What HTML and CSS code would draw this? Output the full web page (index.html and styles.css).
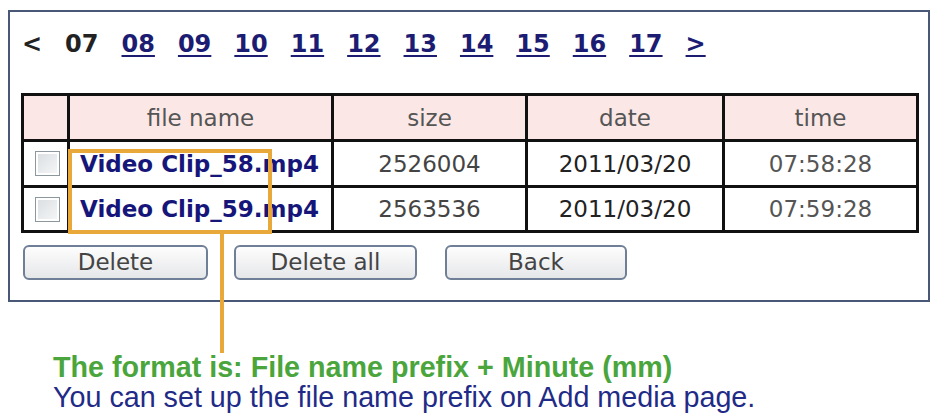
FILE: index.html
```html
<!DOCTYPE html>
<html lang="en">
<head>
	<meta charset="UTF-8">
	<title>Video clips</title>
	<link rel="stylesheet" href="styles.css">
</head>
<body>
	<div id="page">
		<section id="panel">
			<nav id="pager">
				<span class="arrow">&lt;</span>
				<span class="cur">07</span>
				<a href="javascript:;">08</a>
				<a href="javascript:;">09</a>
				<a href="javascript:;">10</a>
				<a href="javascript:;">11</a>
				<a href="javascript:;">12</a>
				<a href="javascript:;">13</a>
				<a href="javascript:;">14</a>
				<a href="javascript:;">15</a>
				<a href="javascript:;">16</a>
				<a href="javascript:;">17</a>
				<a href="javascript:;">&gt;</a>
			</nav>
			<table id="files">
				<colgroup>
					<col class="c-check">
					<col class="c-name">
					<col class="c-size">
					<col class="c-date">
					<col class="c-time">
				</colgroup>
				<tr class="head">
					<th></th>
					<th>file name</th>
					<th>size</th>
					<th>date</th>
					<th>time</th>
				</tr>
				<tr>
					<td><input type="checkbox"></td>
					<td class="name">Video Clip_58.mp4</td>
					<td class="size">2526004</td>
					<td class="date">2011/03/20</td>
					<td class="time">07:58:28</td>
				</tr>
				<tr>
					<td><input type="checkbox"></td>
					<td class="name">Video Clip_59.mp4</td>
					<td class="size">2563536</td>
					<td class="date">2011/03/20</td>
					<td class="time">07:59:28</td>
				</tr>
			</table>
			<div id="actions">
				<button class="b-del">Delete</button>
				<button class="b-all">Delete all</button>
				<button class="b-back">Back</button>
			</div>
		</section>
		<!-- callout round the file names -->
		<div class="mark"></div>
		<div class="mark-line"></div>
		<p id="note">
			<b>The format is: File name prefix + Minute (mm)</b>
			<span>You can set up the file name prefix on Add media page.</span>
		</p>
	</div>
</body>
</html>
```

FILE: styles.css
```css
body {
	margin: 0;
	background: #fff;
	font-family: "DejaVu Sans", Verdana, sans-serif;
}
#page {
	position: relative;
	width: 934px;
	height: 408px;
	padding-top: 10px;
}
#panel {
	width: 897px;
	height: 270px;
	margin: 0 0 0 8px;
	padding: 18px 10px 0 11px;
	border: 2px solid #4a5878;
}
#pager {
	display: flex;
	gap: 23px;
	height: 28px;
	margin-left: 1px;
	font-size: 24px;
	font-weight: bold;
	line-height: 28px;
}
#pager .arrow,
#pager .cur {
	color: #222;
}
#pager a {
	color: #1c1c72;
	text-decoration: underline;
	text-decoration-thickness: 2px;
	text-underline-offset: 3px;
}
#files {
	width: 898px;
	margin-top: 35px;
	border-collapse: collapse;
	table-layout: fixed;
	font-size: 23px;
}
.c-check { width: 46px; }
.c-name { width: 264px; }
.c-size { width: 194px; }
.c-date { width: 197px; }
.c-time { width: 194px; }
#files tr {
	height: 46px;
}
#files tr:last-child {
	height: 45px;
}
#files th,
#files td {
	padding: 0;
	border: 3px solid #111;
	text-align: center;
	white-space: nowrap;
}
#files th {
	background: #fbe8e6;
	color: #555;
	font-weight: normal;
}
#files .name {
	padding-left: 10px;
	text-align: left;
	color: #16167a;
	font-weight: bold;
}
#files .size { color: #444; }
#files .date { color: #222; }
#files .time { color: #555; }
#files input {
	display: block;
	width: 25px;
	height: 25px;
	margin: 0 0 0 11px;
	border: 1px solid #8c979e;
	background: linear-gradient(135deg, #d9dde0, #f6f7f8);
	box-shadow: inset 0 0 0 2px #fff;
	appearance: none;
}
#actions {
	display: flex;
	margin: 12px 0 0 2px;
}
#actions button {
	height: 35px;
	border: 2px solid #6f7f98;
	border-radius: 6px;
	background: linear-gradient(#fdfdfd, #e6e7e9);
	color: #444;
	font-family: "DejaVu Sans", Verdana, sans-serif;
	font-size: 23px;
	line-height: 29px;
	padding: 0;
}
.b-del { width: 185px; }
.b-all { width: 183px; margin-left: 26px; }
.b-back { width: 182px; margin-left: 28px; }
.mark {
	position: absolute;
	left: 68px;
	top: 149px;
	width: 196px;
	height: 77px;
	border: 4px solid #e9a93a;
}
.mark-line {
	position: absolute;
	left: 220px;
	top: 234px;
	width: 4px;
	height: 119px;
	background: #e9a93a;
}
#note {
	margin: 50px 0 0 53px;
	font-family: "Liberation Sans", Arial, sans-serif;
	font-size: 28.7px;
	line-height: 30px;
}
#note b {
	display: block;
	color: #4aa63c;
}
#note span {
	display: block;
	color: #1f2b86;
}
```
